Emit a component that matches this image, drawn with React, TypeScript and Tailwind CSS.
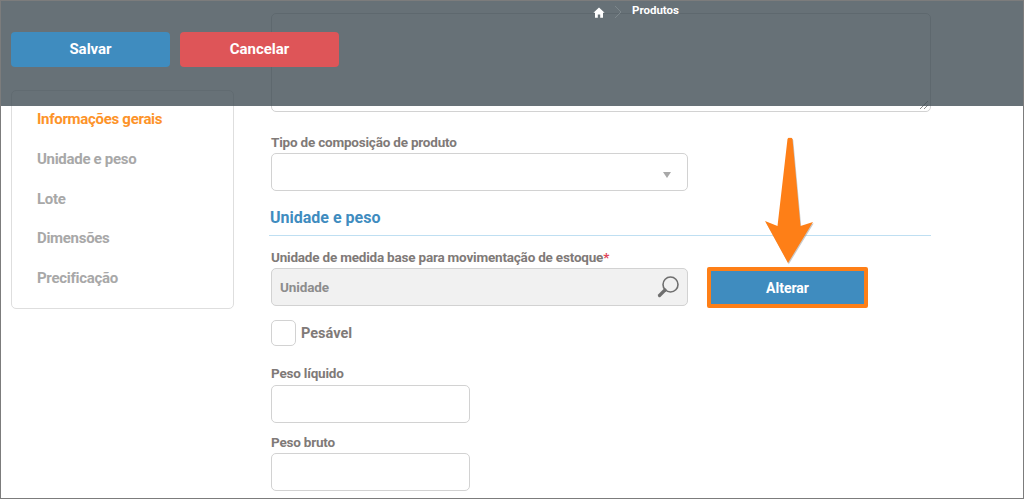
const font = "font-['Roboto',sans-serif]";

/* ─── Icons ──────────────────────────────────── */

function HomeIcon() {
  return (
    <svg width="12" height="11" viewBox="0 0 12 11" aria-hidden>
      <path d="M6 0.5 0.4 5.8H2V10.8H4.8V7.4H7.2V10.8H10V5.8H11.6Z" fill="#ffffff" />
    </svg>
  );
}

function SearchIcon() {
  return (
    <svg width="26" height="26" viewBox="0 0 26 26" fill="none" aria-hidden>
      <circle cx="15.5" cy="10.5" r="7.5" stroke="#6f6f6f" strokeWidth="1.6" />
      <path d="M10 16 4.5 21.5" stroke="#6f6f6f" strokeWidth="3.2" strokeLinecap="round" />
    </svg>
  );
}

function Arrow() {
  return (
    <svg
      className="absolute left-[760px] top-[134px] z-30"
      width="58"
      height="134"
      viewBox="0 0 58 134"
      aria-hidden
    >
      <path
        d="M30 4 Q28.5 3 27.5 5 L17.5 92 L5 87 L28 129 L53 88 L40.5 92 L32.5 5 Q31.5 3 30 4Z"
        fill="#8a8a8a"
        opacity="0.45"
        transform="translate(0.8 1.2)"
      />
      <path
        d="M30 4 Q28.5 3 27.5 5 L17.5 92 L5 87 L28 129 L53 88 L40.5 92 L32.5 5 Q31.5 3 30 4Z"
        fill="#fe7f17"
      />
    </svg>
  );
}

/* ─── Field bits ─────────────────────────────── */

function Label({ children }: { children: React.ReactNode }) {
  return (
    <div className="pb-[2px] text-[13.5px] leading-[14px] font-bold tracking-[-0.2px] text-[#7f7a78]">{children}</div>
  );
}

function Box({ className = "" }: { className?: string }) {
  return <div className={`rounded-[5px] border border-[#d2d2d2] bg-white ${className}`} />;
}

const menu = ["Informações gerais", "Unidade e peso", "Lote", "Dimensões", "Precificação"];

/* ─── Page ───────────────────────────────────── */

export default function App() {
  return (
    <div className={`relative h-[499px] w-[1024px] overflow-hidden bg-white ${font}`}>
      {/* Page content */}
      <div className="flex h-full gap-[37px] pl-[11px]">
        <aside className="mt-[90px] flex h-[219px] w-[223px] shrink-0 flex-col gap-[19.8px] rounded-[5px] border border-[#dedede] pt-[18px] pl-[25px]">
          {menu.map((item, i) => (
            <div
              key={item}
              className={`text-[15px] leading-[20px] font-bold tracking-[-0.3px] ${i === 0 ? "text-[#fd9329]" : "text-[#a8a8a8]"}`}
            >
              {item}
            </div>
          ))}
        </aside>

        <main className="flex w-[660px] flex-col pt-[13px]">
          {/* Textarea */}
          <div className="relative h-[99px] w-[660px] rounded-[5px] border border-[#d2d2d2]">
            <svg className="absolute right-[1px] bottom-[1px]" width="10" height="10" viewBox="0 0 10 10" aria-hidden>
              <path d="M1 9 9 1M5 9 9 5" stroke="#8a8a8a" strokeWidth="1" />
            </svg>
          </div>

          <div className="mt-[23px]">
            <Label>Tipo de composição de produto</Label>
          </div>
          <div className="relative mt-[2px] h-[38px] w-[417px] rounded-[5px] border border-[#d2d2d2]">
            <span className="absolute right-[16px] top-[18px] h-0 w-0 border-x-[4px] border-t-[6px] border-x-transparent border-t-[#a8a8a8]" />
          </div>

          <h2 className="-ml-[2px] mt-[17px] border-b border-[#bfdff2] pb-[8px] pl-[1px] text-[16px] leading-[19px] font-bold text-[#3f8cbf]">
            Unidade e peso
          </h2>

          <div className="mt-[14px]">
            <Label>
              Unidade de medida base para movimentação de estoque<span className="text-[#e0455a]">*</span>
            </Label>
          </div>

          <div className="mt-[1px] flex h-[41px] items-start gap-[19px]">
            <div className="mt-[1px] flex h-[38px] w-[417px] items-center justify-between rounded-[5px] border border-[#d2d2d2] bg-[#f1f1f1] pr-[6px] pl-[8px]">
              <span className="mt-[1px] text-[13.5px] font-bold tracking-[-0.1px] text-[#8d8d8d]">Unidade</span>
              <SearchIcon />
            </div>
            <button className="h-[41px] w-[161px] rounded-[2px] border-[4px] border-[#fe7f17] bg-[#3f8cbf] pt-[2px] text-[14px] font-bold text-white">
              Alterar
            </button>
          </div>

          <div className="mt-[12px] flex items-center gap-[5px]">
            <Box className="h-[26px] w-[25px]" />
            <span className="mt-[1px] text-[14.5px] font-bold text-[#7f7a78]">Pesável</span>
          </div>

          <div className="mt-[20px]">
            <Label>Peso líquido</Label>
          </div>
          <Box className="mt-[3px] h-[38px] w-[199px]" />

          <div className="mt-[12px]">
            <Label>Peso bruto</Label>
          </div>
          <Box className="mt-[2px] h-[38px] w-[199px]" />
        </main>
      </div>

      {/* Fixed header over the content */}
      <header className="absolute inset-x-0 top-0 z-20 h-[106px] bg-[#414e55]/80">
        <div className="absolute left-[593px] top-[5px] flex items-center gap-[9px]">
          <HomeIcon />
          <svg width="8" height="14" viewBox="0 0 8 14" fill="none" aria-hidden>
            <path d="M1 1 7 7 1 13" stroke="#7d878c" strokeWidth="1" />
          </svg>
          <span className="-mt-[5px] ml-[1px] text-[11.5px] leading-[14px] font-bold text-white">Produtos</span>
        </div>
        <div className="flex gap-[10px] pt-[32px] pl-[11px]">
          <button className="h-[35px] w-[159px] rounded-[4px] bg-[#3f8cbf] text-[15px] font-bold text-white">
            Salvar
          </button>
          <button className="h-[35px] w-[159px] rounded-[4px] bg-[#de5558] text-[15px] font-bold text-white">
            Cancelar
          </button>
        </div>
      </header>

      <Arrow />

      {/* Screenshot frame */}
      <div className="pointer-events-none absolute inset-0 z-40 border border-[#7c7c7c]" />
    </div>
  );
}
